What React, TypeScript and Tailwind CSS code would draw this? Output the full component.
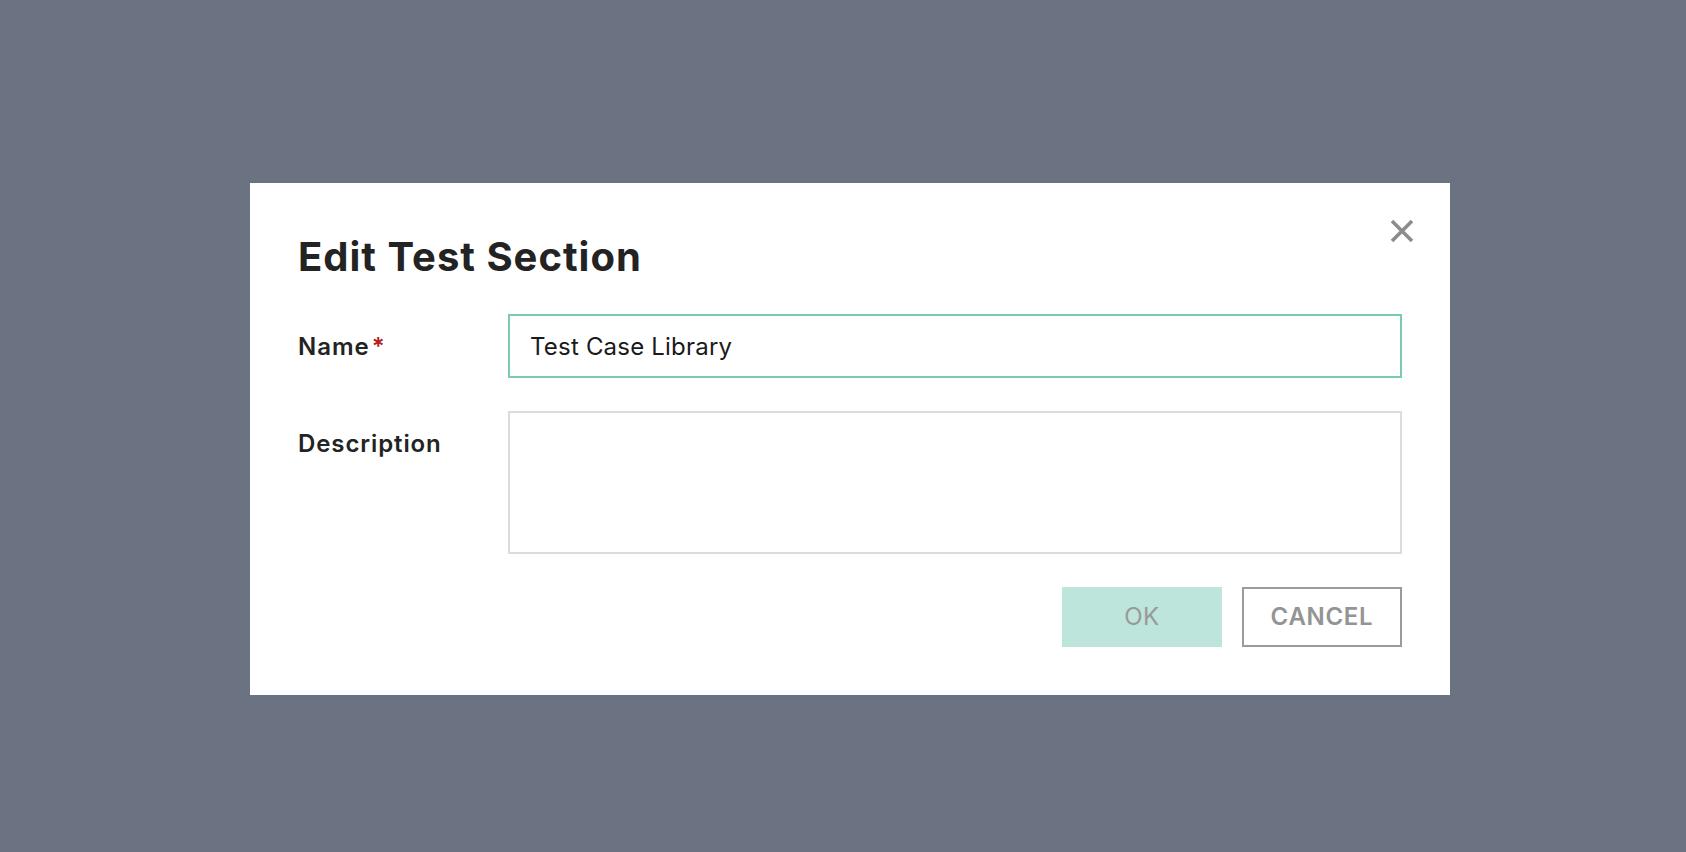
import React from "react";

const CloseIcon = () => (
  <svg width="24" height="24" viewBox="0 0 24 24" fill="none">
    <path d="M2 2L22 22M22 2L2 22" stroke="#8c8c8c" strokeWidth="3.6" />
  </svg>
);

export default function App() {
  return (
    <div
      className="min-h-screen w-full bg-[#6b7383] pt-[183px] pl-[250px]"
      style={{ fontFamily: "Inter, 'Noto Sans', sans-serif" }}
    >
      {/* dialog */}
      <div className="relative w-[1200px] bg-white px-12 pt-[50px] pb-12">
        <button className="absolute right-[36px] top-[36px] flex h-6 w-6 items-center justify-center">
          <CloseIcon />
        </button>

        <h2 className="text-[40px] font-bold leading-[48px] tracking-[1px] text-[#232323]">
          Edit Test Section
        </h2>

        <div className="mt-[33px] flex flex-col gap-8">
          <div className="flex">
            <label className="w-[210px] pt-[1px] text-[24px] font-semibold leading-[64px] tracking-[1px] text-[#232323]">
              Name<span className="ml-[2px] text-[#b0211c]">*</span>
            </label>
            <input
              defaultValue="Test Case Library"
              className="h-16 flex-1 border-2 border-[#79cbb3] px-5 text-[24px] tracking-[0.2px] text-[#1a1a1a] outline-none"
            />
          </div>

          <div className="flex">
            <label className="w-[210px] pt-[1px] text-[24px] font-semibold leading-[64px] tracking-[0.9px] text-[#232323]">
              Description
            </label>
            <textarea className="h-[143px] flex-1 resize-none border-2 border-[#dcdcdc] px-5 py-3 text-[24px] outline-none" />
          </div>
        </div>

        <div className="mt-[33px] flex justify-end gap-5">
          <button className="h-[60px] w-[160px] bg-[#bde5dc] text-[24px] font-normal tracking-[0.6px] text-[#999]">
            OK
          </button>
          <button className="h-[60px] w-[160px] border-2 border-[#9b9b9b] bg-white text-[24px] font-semibold tracking-[0.7px] text-[#949494]">
            CANCEL
          </button>
        </div>
      </div>
    </div>
  );
}
